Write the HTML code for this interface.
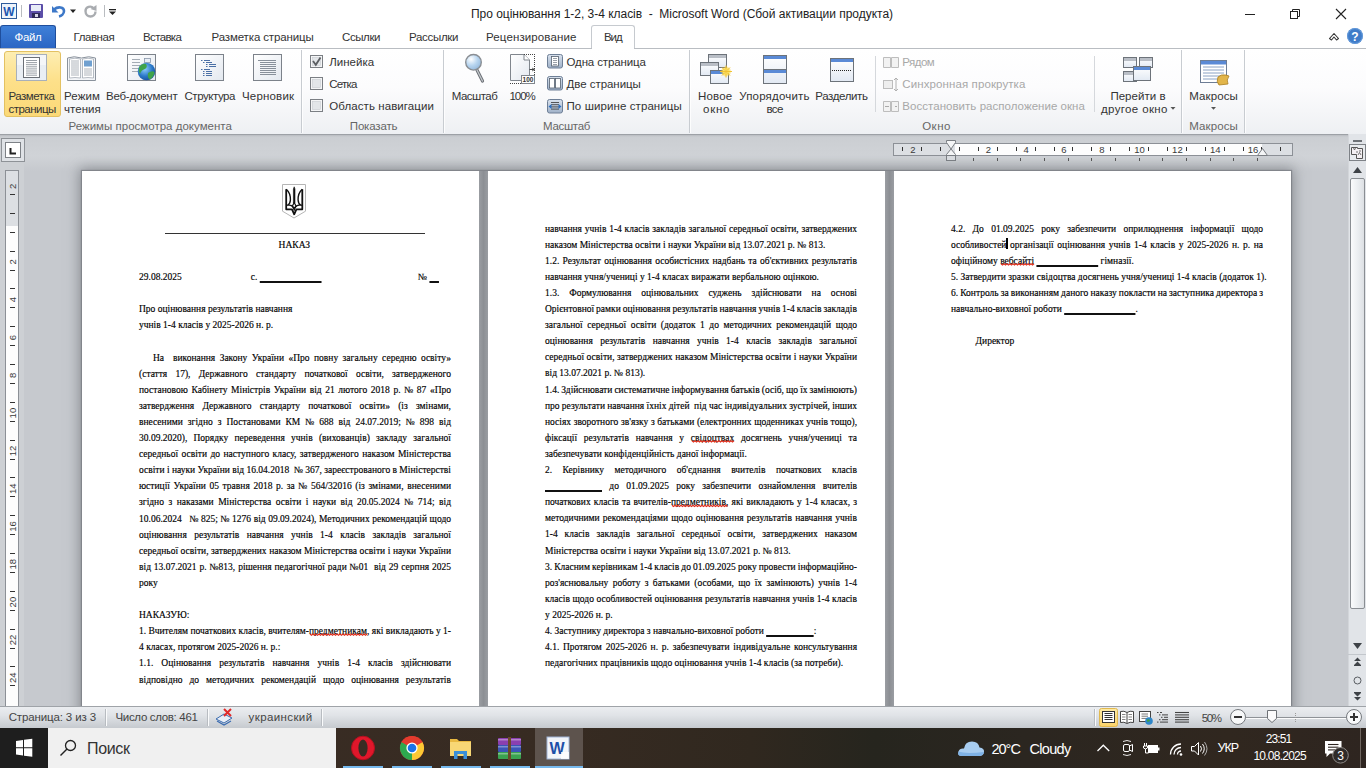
<!DOCTYPE html>
<html><head><meta charset="utf-8"><style>
*{margin:0;padding:0;box-sizing:border-box}
html,body{width:1366px;height:768px;overflow:hidden;background:#c6c9ce;font-family:"Liberation Sans",sans-serif}
.a{position:absolute}
.t{position:absolute;white-space:pre}
.u{color:transparent;-webkit-text-stroke:0;text-decoration:underline;text-decoration-color:#111;text-decoration-thickness:1.5px;text-underline-offset:1.2px}
.d{position:absolute;white-space:pre;font-family:"Liberation Serif",serif;font-size:9.5px;line-height:16px;color:#000;-webkit-text-stroke:0.15px #000}
</style></head>
<body>
<div class="a" style="left:0;top:0;width:1366px;height:48px;background:#fff"></div><div class="a" style="left:0;top:25px;width:56px;height:23px;background:linear-gradient(#3f80d8,#2b66c4);border:1px solid #1f4e9c;border-bottom:none;border-radius:3px 3px 0 0"></div><div class="a" style="left:591px;top:25px;width:44px;height:24px;background:#fff;border:1px solid #c6cacf;border-bottom:none;border-radius:3px 3px 0 0"></div><div class="a" style="left:0;top:48px;width:1366px;height:87px;background:linear-gradient(#ffffff 0%,#fcfcfd 45%,#eef0f3 100%);border-top:1px solid #b9bdc2;border-bottom:1px solid #9da1a6"></div><div class="a" style="left:592px;top:47px;width:42px;height:3px;background:#fff"></div><svg class="a" style="left:0;top:0" width="1366" height="134"><defs>
<linearGradient id="gBtn" x1="0" y1="0" x2="0" y2="1"><stop offset="0" stop-color="#fdeeb3"/><stop offset=".45" stop-color="#fde08a"/><stop offset="1" stop-color="#fbd977"/></linearGradient>
<linearGradient id="gFrame" x1="0" y1="0" x2="1" y2="1"><stop offset="0" stop-color="#ffffff"/><stop offset="1" stop-color="#e3e8ef"/></linearGradient>
<linearGradient id="gBlueBtn" x1="0" y1="0" x2="0" y2="1"><stop offset="0" stop-color="#d9e2ee"/><stop offset="1" stop-color="#9fb1c8"/></linearGradient>
<radialGradient id="gGlobe" cx=".4" cy=".35" r=".7"><stop offset="0" stop-color="#8fd0ff"/><stop offset=".6" stop-color="#2a78c8"/><stop offset="1" stop-color="#1a4f9a"/></radialGradient>
<radialGradient id="gLens" cx=".35" cy=".3" r=".8"><stop offset="0" stop-color="#ffffff"/><stop offset=".5" stop-color="#b9d6f0"/><stop offset="1" stop-color="#8fb4d8"/></radialGradient>
<radialGradient id="gSpark" cx=".5" cy=".5" r=".5"><stop offset="0" stop-color="#fffbe0"/><stop offset=".5" stop-color="#ffe35a"/><stop offset="1" stop-color="#f5c21b" stop-opacity="0"/></radialGradient>
<linearGradient id="gWin" x1="0" y1="0" x2="0" y2="1"><stop offset="0" stop-color="#ffffff"/><stop offset="1" stop-color="#e2e9f3"/></linearGradient>
</defs><rect x="1.5" y="3.5" width="15" height="15" fill="#eef4fb" stroke="#2f5c9c" stroke-width="1"/><text x="9" y="15.5" font-family="Liberation Sans" font-weight="bold" font-size="12" fill="#1b56b0" text-anchor="middle">W</text><line x1="21.5" y1="5" x2="21.5" y2="17" stroke="#b9bcc0"/><rect x="29" y="4" width="14" height="14" rx="1" fill="#5b4ea8"/><rect x="31" y="5" width="10" height="6" fill="#e8ecf7"/><rect x="32" y="13" width="8" height="5" fill="#2d2a58"/><rect x="35" y="14" width="3" height="3" fill="#d6d6e8"/><path d="M54 9.5 C58 6 64 7 64 11 C64 14 61 16 59 16.5" fill="none" stroke="#3d78c8" stroke-width="2.6"/><path d="M52 6 L52 12.5 L58.5 12.5 Z" fill="#3d78c8"/><path d="M70 9.5 H76 L73 13 Z" fill="#222"/><path d="M93.5 8 C91 5.5 85.5 6.5 85.5 11 C85.5 14.5 88 16.5 90.5 16.5 C93 16.5 95.5 14.5 95.5 11.5" fill="none" stroke="#a9acb0" stroke-width="2.4"/><path d="M96.5 5 L96.5 11 L90.5 9 Z" fill="#a9acb0"/><line x1="104.5" y1="5" x2="104.5" y2="17" stroke="#b9bcc0"/><rect x="109" y="9" width="7" height="1.3" fill="#222"/><path d="M109 11.5 H116 L112.5 15 Z" fill="#222"/><line x1="1245" y1="14.5" x2="1255" y2="14.5" stroke="#222" stroke-width="1"/><rect x="1290.5" y="11.5" width="7" height="7" fill="none" stroke="#222"/><path d="M1292.5 11.5 V9.5 H1299.5 V16.5 H1297.5" fill="none" stroke="#222"/><path d="M1336 9 L1346 19 M1346 9 L1336 19" stroke="#222" stroke-width="1.1"/><path d="M1329.5 38.5 L1334 33.5 L1338.5 38.5 L1336.5 40 L1334 37 L1331.5 40 Z" fill="#fff" stroke="#333" stroke-width="1.1" stroke-linejoin="round"/><circle cx="1355" cy="36" r="8" fill="#3f7cc9"/><circle cx="1355" cy="36" r="7.4" fill="none" stroke="#6ea3e0" stroke-width=".8"/><text x="1355" y="41" font-family="Liberation Sans" font-weight="bold" font-size="12" fill="#fff" text-anchor="middle">?</text><rect x="4.5" y="51.5" width="56" height="65" rx="2.5" fill="url(#gBtn)" stroke="#e3c162"/><rect x="16.5" y="54.5" width="30" height="26" fill="#e9eef4" stroke="#a8b0ba"/><rect x="17" y="55" width="29" height="10" fill="#f4f6f9"/><rect x="23.5" y="57.5" width="16" height="20" fill="#fff" stroke="#6b7077"/><line x1="26" y1="60.5" x2="37" y2="60.5" stroke="#8c939b" stroke-width=".9"/><line x1="26" y1="62.6" x2="37" y2="62.6" stroke="#8c939b" stroke-width=".9"/><line x1="26" y1="64.7" x2="37" y2="64.7" stroke="#8c939b" stroke-width=".9"/><line x1="26" y1="66.8" x2="37" y2="66.8" stroke="#8c939b" stroke-width=".9"/><line x1="26" y1="68.9" x2="37" y2="68.9" stroke="#8c939b" stroke-width=".9"/><line x1="26" y1="71.0" x2="37" y2="71.0" stroke="#8c939b" stroke-width=".9"/><line x1="26" y1="73.1" x2="37" y2="73.1" stroke="#8c939b" stroke-width=".9"/><line x1="26" y1="75.2" x2="37" y2="75.2" stroke="#8c939b" stroke-width=".9"/><path d="M67.5 80.5 V58 Q74 55.5 81.5 58 Q89 55.5 95.5 58 V80.5 Z" fill="#f3f5f8" stroke="#8a929c"/><path d="M69.5 78 V59 Q75 57.5 80.5 59 V78 Q75 77 69.5 78 Z" fill="#fff" stroke="#9aa1aa" stroke-width=".7"/><path d="M82.5 78 V59 Q88 57.5 93.5 59 V78 Q88 77 82.5 78 Z" fill="#fff" stroke="#9aa1aa" stroke-width=".7"/><line x1="71" y1="61" x2="79" y2="61" stroke="#9aa1aa" stroke-width=".8"/><line x1="71" y1="63" x2="79" y2="63" stroke="#9aa1aa" stroke-width=".8"/><line x1="71" y1="65" x2="79" y2="65" stroke="#9aa1aa" stroke-width=".8"/><line x1="71" y1="67" x2="79" y2="67" stroke="#9aa1aa" stroke-width=".8"/><line x1="71" y1="69" x2="79" y2="69" stroke="#9aa1aa" stroke-width=".8"/><line x1="71" y1="71" x2="79" y2="71" stroke="#9aa1aa" stroke-width=".8"/><line x1="71" y1="73" x2="79" y2="73" stroke="#9aa1aa" stroke-width=".8"/><line x1="71" y1="75" x2="79" y2="75" stroke="#9aa1aa" stroke-width=".8"/><rect x="84" y="60.5" width="8" height="6" fill="#6fa0d0"/><line x1="84" y1="69" x2="92" y2="69" stroke="#9aa1aa" stroke-width=".8"/><line x1="84" y1="71" x2="92" y2="71" stroke="#9aa1aa" stroke-width=".8"/><line x1="84" y1="73" x2="92" y2="73" stroke="#9aa1aa" stroke-width=".8"/><line x1="84" y1="75" x2="92" y2="75" stroke="#9aa1aa" stroke-width=".8"/><rect x="127.5" y="54.5" width="28" height="26" fill="url(#gFrame)" stroke="#7c828a"/><line x1="132" y1="59.5" x2="140" y2="59.5" stroke="#9aa3ad" stroke-width=".9"/><line x1="132" y1="62.5" x2="140" y2="62.5" stroke="#9aa3ad" stroke-width=".9"/><line x1="132" y1="65.5" x2="140" y2="65.5" stroke="#9aa3ad" stroke-width=".9"/><line x1="132" y1="68.5" x2="140" y2="68.5" stroke="#9aa3ad" stroke-width=".9"/><line x1="132" y1="71.5" x2="140" y2="71.5" stroke="#9aa3ad" stroke-width=".9"/><rect x="144.5" y="58.5" width="6" height="4" fill="#e8eef6" stroke="#8896a8" stroke-width=".8"/><circle cx="146.5" cy="71.5" r="8.8" fill="url(#gGlobe)"/><path d="M139 67 Q142 63 146 64 Q148 67 145 69 Q141 70 140 74 Q138 71 139 67 Z M148 73 Q152 70 154.5 72 Q154 77 150 79.5 Q147 78 148 73 Z" fill="#3fa34a"/><rect x="195.5" y="54.5" width="28" height="26" fill="url(#gFrame)" stroke="#7c828a"/><line x1="201" y1="60.5" x2="202.5" y2="60.5" stroke="#4a6fa5" stroke-width="1"/><line x1="204" y1="60.5" x2="210" y2="60.5" stroke="#4a6fa5" stroke-width="1"/><line x1="203" y1="62.5" x2="204.5" y2="62.5" stroke="#4a6fa5" stroke-width="1"/><line x1="206" y1="62.5" x2="212" y2="62.5" stroke="#4a6fa5" stroke-width="1"/><line x1="206" y1="64.5" x2="207.5" y2="64.5" stroke="#4a6fa5" stroke-width="1"/><line x1="209" y1="64.5" x2="216" y2="64.5" stroke="#4a6fa5" stroke-width="1"/><line x1="206" y1="66.5" x2="207.5" y2="66.5" stroke="#4a6fa5" stroke-width="1"/><line x1="209" y1="66.5" x2="216" y2="66.5" stroke="#4a6fa5" stroke-width="1"/><line x1="201" y1="69.5" x2="202.5" y2="69.5" stroke="#4a6fa5" stroke-width="1"/><line x1="204" y1="69.5" x2="210" y2="69.5" stroke="#4a6fa5" stroke-width="1"/><line x1="203" y1="71.5" x2="204.5" y2="71.5" stroke="#4a6fa5" stroke-width="1"/><line x1="206" y1="71.5" x2="212" y2="71.5" stroke="#4a6fa5" stroke-width="1"/><line x1="203" y1="73.5" x2="204.5" y2="73.5" stroke="#4a6fa5" stroke-width="1"/><line x1="206" y1="73.5" x2="212" y2="73.5" stroke="#4a6fa5" stroke-width="1"/><line x1="203" y1="75.5" x2="204.5" y2="75.5" stroke="#4a6fa5" stroke-width="1"/><line x1="206" y1="75.5" x2="212" y2="75.5" stroke="#4a6fa5" stroke-width="1"/><rect x="253.5" y="54.5" width="28" height="26" fill="url(#gFrame)" stroke="#7c828a"/><line x1="258" y1="60.5" x2="276" y2="60.5" stroke="#7c8590" stroke-width=".9"/><line x1="260" y1="62.5" x2="276" y2="62.5" stroke="#7c8590" stroke-width=".9"/><line x1="260" y1="64.5" x2="276" y2="64.5" stroke="#7c8590" stroke-width=".9"/><line x1="260" y1="66.5" x2="276" y2="66.5" stroke="#7c8590" stroke-width=".9"/><line x1="260" y1="68.5" x2="276" y2="68.5" stroke="#7c8590" stroke-width=".9"/><line x1="260" y1="70.5" x2="276" y2="70.5" stroke="#7c8590" stroke-width=".9"/><line x1="260" y1="72.5" x2="276" y2="72.5" stroke="#7c8590" stroke-width=".9"/><line x1="260" y1="74.5" x2="276" y2="74.5" stroke="#7c8590" stroke-width=".9"/><line x1="875.5" y1="56" x2="875.5" y2="112" stroke="#d5d8dc"/><line x1="1094.5" y1="56" x2="1094.5" y2="112" stroke="#d5d8dc"/><line x1="301.5" y1="50" x2="301.5" y2="133" stroke="#c8ccd1"/><line x1="302.5" y1="50" x2="302.5" y2="133" stroke="#ffffff" stroke-opacity=".8"/><line x1="443.5" y1="50" x2="443.5" y2="133" stroke="#c8ccd1"/><line x1="444.5" y1="50" x2="444.5" y2="133" stroke="#ffffff" stroke-opacity=".8"/><line x1="689.5" y1="50" x2="689.5" y2="133" stroke="#c8ccd1"/><line x1="690.5" y1="50" x2="690.5" y2="133" stroke="#ffffff" stroke-opacity=".8"/><line x1="1181.5" y1="50" x2="1181.5" y2="133" stroke="#c8ccd1"/><line x1="1182.5" y1="50" x2="1182.5" y2="133" stroke="#ffffff" stroke-opacity=".8"/><line x1="1244.5" y1="50" x2="1244.5" y2="133" stroke="#c8ccd1"/><line x1="1245.5" y1="50" x2="1245.5" y2="133" stroke="#ffffff" stroke-opacity=".8"/><rect x="310.5" y="55.5" width="12" height="12" fill="#f4f5f6" stroke="#7b7f84"/><rect x="312.5" y="57.5" width="8" height="8" fill="#e3e6e9" stroke="#c9ccd0" stroke-width=".6"/><rect x="310.5" y="77.5" width="12" height="12" fill="#f4f5f6" stroke="#7b7f84"/><rect x="312.5" y="79.5" width="8" height="8" fill="#e3e6e9" stroke="#c9ccd0" stroke-width=".6"/><rect x="310.5" y="99.5" width="12" height="12" fill="#f4f5f6" stroke="#7b7f84"/><rect x="312.5" y="101.5" width="8" height="8" fill="#e3e6e9" stroke="#c9ccd0" stroke-width=".6"/><path d="M313 61 L315.8 64.8 L320.5 57.5" fill="none" stroke="#5c5f63" stroke-width="1.8"/><line x1="477" y1="70" x2="482.5" y2="81" stroke="#6d7177" stroke-width="3.2" stroke-linecap="round"/><line x1="477" y1="70" x2="482.5" y2="81" stroke="#c4c8cc" stroke-width="1.2" stroke-linecap="round"/><circle cx="473.5" cy="62.3" r="7.8" fill="url(#gLens)" stroke="#8a8e93" stroke-width="1.4"/><path d="M510.5 54.5 H524 L529.5 60 V80.5 H510.5 Z" fill="url(#gFrame)" stroke="#80868d"/><path d="M524 54.5 V60 H529.5" fill="#fff" stroke="#80868d"/><path d="M524 54.5 H535 M510 83.5 H521" fill="none" stroke="#444" stroke-dasharray="1 1"/><path d="M534.5 56 V84" fill="none" stroke="#444" stroke-dasharray="1 1"/><path d="M529.5 69.5 H534" stroke="#444"/><path d="M532 68 L534.5 69.5 L532 71" fill="none" stroke="#444" stroke-width=".8"/><rect x="521.5" y="75.5" width="13" height="8" fill="#fff" stroke="#80868d"/><text x="528" y="82.3" font-family="Liberation Sans" font-weight="bold" font-size="6.5" fill="#333" text-anchor="middle">100</text><rect x="547.5" y="54.5" width="15" height="13.5" rx="2" fill="url(#gBlueBtn)" stroke="#6e7f96"/><rect x="551.5" y="56.5" width="7" height="9.5" fill="#fff" stroke="#55606e" stroke-width=".8"/><line x1="553" y1="58.5" x2="557" y2="58.5" stroke="#55606e" stroke-width=".6"/><line x1="553" y1="60.5" x2="557" y2="60.5" stroke="#55606e" stroke-width=".6"/><line x1="553" y1="62.5" x2="557" y2="62.5" stroke="#55606e" stroke-width=".6"/><line x1="553" y1="64.5" x2="557" y2="64.5" stroke="#55606e" stroke-width=".6"/><rect x="547.5" y="76.5" width="15" height="13.5" rx="2" fill="url(#gBlueBtn)" stroke="#6e7f96"/><rect x="549.5" y="78.5" width="5" height="9.5" fill="#fff" stroke="#55606e" stroke-width=".8"/><rect x="555.5" y="78.5" width="5" height="9.5" fill="#fff" stroke="#55606e" stroke-width=".8"/><rect x="547.5" y="99.5" width="15" height="13.5" rx="2" fill="url(#gBlueBtn)" stroke="#6e7f96"/><line x1="551" y1="102.5" x2="559" y2="102.5" stroke="#333" stroke-width=".8"/><line x1="551" y1="104.7" x2="559" y2="104.7" stroke="#333" stroke-width=".8"/><line x1="551" y1="106.9" x2="559" y2="106.9" stroke="#333" stroke-width=".8"/><line x1="551" y1="109.1" x2="559" y2="109.1" stroke="#333" stroke-width=".8"/><path d="M548.5 106.5 L551.5 104.0 V109.0 Z M561.5 106.5 L558.5 104.0 V109.0 Z" fill="#2d6fc0"/><rect x="708.5" y="54.5" width="18" height="13" fill="url(#gWin)" stroke="#6d737a"/><rect x="709" y="55" width="17" height="3" fill="#b9bec6"/><rect x="700.5" y="62.5" width="18" height="13" fill="url(#gWin)" stroke="#6d737a"/><rect x="701" y="63" width="17" height="3" fill="#b9bec6"/><rect x="710.5" y="70.5" width="18" height="13" fill="url(#gWin)" stroke="#6d737a"/><rect x="711" y="71" width="17" height="3" fill="#5a8ad6"/><circle cx="726" cy="71.5" r="5.5" fill="url(#gSpark)"/><path d="M726 65.5 V77.5 M720 71.5 H732 M722 67.5 L730 75.5 M730 67.5 L722 75.5" stroke="#f1c232" stroke-width="1"/><rect x="763.5" y="55.5" width="23" height="28" fill="url(#gWin)" stroke="#6d737a"/><rect x="764" y="56" width="22" height="3" fill="#5a8ad6"/><line x1="764" y1="69.5" x2="786" y2="69.5" stroke="#6d737a"/><rect x="764" y="70" width="22" height="3" fill="#5a8ad6"/><rect x="830.5" y="58.5" width="23" height="23" fill="url(#gWin)" stroke="#6d737a"/><rect x="831" y="59" width="22" height="3" fill="#5a8ad6"/><line x1="832" y1="70.5" x2="852" y2="70.5" stroke="#222" stroke-dasharray="1 1"/><path d="M883.5 57.5 H890.5 V67.5 H883.5 Z M891.5 57.5 H898.5 V67.5 H891.5 Z" fill="#f2f2f2" stroke="#bdbdbd"/><rect x="883.5" y="80.5" width="9" height="8" fill="#eee" stroke="#bdbdbd"/><path d="M896 78 V91 M894 80 L896 78 L898 80 M894 89 L896 91 L898 89" fill="none" stroke="#b0b0b0"/><path d="M883.5 101.5 H890.5 V111.5 H883.5 Z M891.5 101.5 H898.5 V111.5 H891.5 Z" fill="#f2f2f2" stroke="#bdbdbd"/><path d="M885 106.5 H889 M895 106.5 H897" stroke="#aaa"/><rect x="1123.5" y="57.5" width="13" height="10" fill="url(#gWin)" stroke="#6d737a"/><rect x="1124" y="58" width="12" height="3" fill="#b9bec6"/><rect x="1139.5" y="57.5" width="13" height="10" fill="url(#gWin)" stroke="#6d737a"/><rect x="1140" y="58" width="12" height="3" fill="#b9bec6"/><rect x="1123.5" y="71.5" width="13" height="10" fill="url(#gWin)" stroke="#6d737a"/><rect x="1124" y="72" width="12" height="3" fill="#b9bec6"/><rect x="1133.5" y="66.5" width="17" height="14" fill="url(#gWin)" stroke="#6d737a"/><rect x="1134" y="67" width="16" height="3" fill="#5a8ad6"/><path d="M1170.5 107 H1175.5 L1173 109.8 Z" fill="#555"/><rect x="1200.5" y="60.5" width="26" height="22" fill="#fff" stroke="#6d7d95"/><rect x="1201" y="61" width="25" height="3.5" fill="#5a8ad6"/><line x1="1203" y1="67" x2="1224" y2="67" stroke="#8aa2c4" stroke-width="1"/><line x1="1203" y1="70" x2="1224" y2="70" stroke="#8aa2c4" stroke-width="1"/><line x1="1203" y1="73" x2="1224" y2="73" stroke="#8aa2c4" stroke-width="1"/><line x1="1203" y1="76" x2="1224" y2="76" stroke="#8aa2c4" stroke-width="1"/><line x1="1203" y1="79" x2="1224" y2="79" stroke="#8aa2c4" stroke-width="1"/><path d="M1218 77 Q1221 74 1226 75 L1229 76 Q1226 80 1228 84 L1219 85 Q1216 82 1218 77 Z" fill="#e2b54a" stroke="#a97e1f" stroke-width=".8"/><path d="M1211 107 H1216 L1213.5 109.8 Z" fill="#555"/></svg><div class="a" style="left:0;top:135px;width:1348px;height:36px;background:linear-gradient(#b9bcc1 0px,#cbced2 2px,#d0d3d7 21px,#c6c9ce 36px)"></div><div class="a" style="left:0;top:162px;width:24px;height:544px;background:#cdd0d4"></div><div class="a" style="left:82px;top:171px;width:1209px;height:560px;box-shadow:0 0 1px 1px rgba(110,114,120,.6),0 0 12px 3px rgba(120,124,130,.75)"></div><div class="a" style="left:82px;top:171px;width:397px;height:535px;background:#fff"></div><div class="a" style="left:488px;top:171px;width:397px;height:535px;background:#fff"></div><div class="a" style="left:894px;top:171px;width:397px;height:535px;background:#fff"></div><div class="a" style="left:479px;top:171px;width:9px;height:535px;background:linear-gradient(90deg,#9a9da2,#8c8f94 50%,#9a9da2)"></div><div class="a" style="left:885px;top:171px;width:9px;height:535px;background:linear-gradient(90deg,#9a9da2,#8c8f94 50%,#9a9da2)"></div><div class="d" style="left:153.00px;top:349.50px;word-spacing:2.050px">На  виконання Закону України «Про повну загальну середню освіту»</div><div class="d" style="left:139.00px;top:365.60px;word-spacing:5.873px">(стаття 17), Державного стандарту початкової освіти, затвердженого</div><div class="d" style="left:139.00px;top:381.70px;word-spacing:1.220px">постановою Кабінету Міністрів України від 21 лютого 2018 р. № 87 «Про</div><div class="d" style="left:139.00px;top:397.80px;word-spacing:5.863px">затвердження Державного стандарту початкової освіти» (із змінами,</div><div class="d" style="left:139.00px;top:413.90px;word-spacing:2.596px">внесеними згідно з Постановами КМ № 688 від 24.07.2019; № 898 від</div><div class="d" style="left:139.00px;top:430.00px;word-spacing:3.802px">30.09.2020), Порядку переведення учнів (вихованців) закладу загальної</div><div class="d" style="left:139.00px;top:446.10px;word-spacing:1.072px">середньої освіти до наступного класу, затвердженого наказом Міністерства</div><div class="d" style="left:139.00px;top:462.20px;word-spacing:-0.020px">освіти і науки України від 16.04.2018  № 367, зареєстрованого в Міністерстві</div><div class="d" style="left:139.00px;top:478.30px;word-spacing:1.253px">юстиції України 05 травня 2018 р. за № 564/32016 (із змінами, внесеними</div><div class="d" style="left:139.00px;top:494.40px;word-spacing:2.085px">згідно з наказами Міністерства освіти і науки від 20.05.2024 № 714; від</div><div class="d" style="left:139.00px;top:510.50px;word-spacing:0.181px">10.06.2024   № 825; № 1276 від 09.09.2024), Методичних рекомендацій щодо</div><div class="d" style="left:139.00px;top:526.60px;word-spacing:4.990px">оцінювання результатів навчання учнів 1-4 класів закладів загальної</div><div class="d" style="left:139.00px;top:542.70px;word-spacing:0.171px">середньої освіти, затверджених наказом Міністерства освіти і науки України</div><div class="d" style="left:139.00px;top:558.80px;word-spacing:0.529px">від 13.07.2021 р. №813, рішення педагогічної ради №01  від 29 серпня 2025</div><div class="d" style="left:139.00px;top:574.90px">року</div><div class="d" style="left:139.00px;top:607.10px">НАКАЗУЮ:</div><div class="d" style="left:139.00px;top:623.20px;word-spacing:0.061px">1. Вчителям початкових класів, вчителям-предметникам, які викладають у 1-</div><div class="d" style="left:139.00px;top:639.30px">4 класах, протягом 2025-2026 н. р.:</div><div class="d" style="left:139.00px;top:655.40px;word-spacing:5.668px">1.1. Оцінювання результатів навчання учнів 1-4 класів здійснювати</div><div class="d" style="left:139.00px;top:671.50px;word-spacing:4.510px">відповідно до методичних рекомендацій щодо оцінювання результатів</div><div class="d" style="left:139.00px;top:301.20px">Про оцінювання результатів навчання</div><div class="d" style="left:139.00px;top:317.30px">учнів 1-4 класів у 2025-2026 н. р.</div><div class="d" style="left:545.00px;top:220.50px;word-spacing:0.374px">навчання учнів 1-4 класів закладів загальної середньої освіти, затверджених</div><div class="d" style="left:545.00px;top:236.60px">наказом Міністерства освіти і науки України від 13.07.2021 р. № 813.</div><div class="d" style="left:545.00px;top:252.70px;word-spacing:0.869px">1.2. Результат оцінювання особистісних надбань та об&#x27;єктивних результатів</div><div class="d" style="left:545.00px;top:268.80px">навчання учня/учениці у 1-4 класах виражати вербальною оцінкою.</div><div class="d" style="left:545.00px;top:284.90px;word-spacing:7.554px">1.3. Формулювання оцінювальних суджень здійснювати на основі</div><div class="d" style="left:545.00px;top:301.00px;word-spacing:-0.445px">Орієнтовної рамки оцінювання результатів навчання учнів 1-4 класів закладів</div><div class="d" style="left:545.00px;top:317.10px;word-spacing:2.142px">загальної середньої освіти (додаток 1 до методичних рекомендацій щодо</div><div class="d" style="left:545.00px;top:333.20px;word-spacing:4.990px">оцінювання результатів навчання учнів 1-4 класів закладів загальної</div><div class="d" style="left:545.00px;top:349.30px;word-spacing:0.171px">середньої освіти, затверджених наказом Міністерства освіти і науки України</div><div class="d" style="left:545.00px;top:365.40px">від 13.07.2021 р. № 813).</div><div class="d" style="left:545.00px;top:381.50px;word-spacing:-0.330px">1.4. Здійснювати систематичне інформування батьків (осіб, що їх замінюють)</div><div class="d" style="left:545.00px;top:397.60px;word-spacing:-0.102px">про результати навчання їхніх дітей  під час індивідуальних зустрічей, інших</div><div class="d" style="left:545.00px;top:413.70px;word-spacing:0.236px">носіях зворотного зв&#x27;язку з батьками (електронних щоденниках учнів тощо),</div><div class="d" style="left:545.00px;top:429.80px;word-spacing:4.306px">фіксації результатів навчання у свідоцтвах досягнень учня/учениці та</div><div class="d" style="left:545.00px;top:445.90px">забезпечувати конфіденційність даної інформації.</div><div class="d" style="left:545.00px;top:462.00px;word-spacing:8.103px">2. Керівнику методичного об&#x27;єднання вчителів початкових класів</div><div class="d" style="left:545.00px;top:478.10px;word-spacing:4.930px"><span class="u">____________</span> до 01.09.2025 року забезпечити ознайомлення вчителів</div><div class="d" style="left:545.00px;top:494.20px;word-spacing:0.783px">початкових класів та вчителів-предметників, які викладають у 1-4 класах, з</div><div class="d" style="left:545.00px;top:510.30px;word-spacing:0.801px">методичними рекомендаціями щодо оцінювання результатів навчання учнів</div><div class="d" style="left:545.00px;top:526.40px;word-spacing:4.542px">1-4 класів закладів загальної середньої освіти, затверджених наказом</div><div class="d" style="left:545.00px;top:542.50px">Міністерства освіти і науки України від 13.07.2021 р. № 813.</div><div class="d" style="left:545.00px;top:558.60px;word-spacing:-0.255px">3. Класним керівникам 1-4 класів до 01.09.2025 року провести інформаційно-</div><div class="d" style="left:545.00px;top:574.70px;word-spacing:1.984px">роз&#x27;яснювальну роботу з батьками (особами, що їх замінюють) учнів 1-4</div><div class="d" style="left:545.00px;top:590.80px;word-spacing:0.253px">класів щодо особливостей оцінювання результатів навчання учнів 1-4 класів</div><div class="d" style="left:545.00px;top:606.90px">у 2025-2026 н. р.</div><div class="d" style="left:545.00px;top:623.00px">4. Заступнику директора з навчально-виховної роботи <span class="u">__________</span>:</div><div class="d" style="left:545.00px;top:639.10px;word-spacing:1.385px">4.1. Протягом 2025-2026 н. р. забезпечувати індивідуальне консультування</div><div class="d" style="left:545.00px;top:655.20px">педагогічних працівників щодо оцінювання учнів 1-4 класів (за потреби).</div><div class="d" style="left:951.00px;top:220.50px;word-spacing:4.951px">4.2. До 01.09.2025 року забезпечити оприлюднення інформації щодо</div><div class="d" style="left:951.00px;top:236.60px;word-spacing:1.225px">особливостей організації оцінювання учнів 1-4 класів у 2025-2026 н. р. на</div><div class="d" style="left:951.00px;top:252.70px">офіційному вебсайті <span class="u">_____________</span> гімназії.</div><div class="d" style="left:951.00px;top:268.80px">5. Затвердити зразки свідоцтва досягнень учня/учениці 1-4 класів (додаток 1).</div><div class="d" style="left:951.00px;top:284.90px;word-spacing:-0.308px">6. Контроль за виконанням даного наказу покласти на заступника директора з</div><div class="d" style="left:951.00px;top:301.00px">навчально-виховної роботи <span class="u">_______________</span>.</div><div class="d" style="left:975.60px;top:333.20px">Директор</div><div class="d" style="left:278.6px;top:236.80px;">НАКАЗ</div><div class="d" style="left:139px;top:269.00px;">29.08.2025</div><div class="d" style="left:250.8px;top:269.00px;">с. <span class="u">_____________</span></div><div class="d" style="left:418px;top:269.00px;">№ <span class="u">__</span></div><div class="a" style="left:165px;top:232.5px;width:260px;height:1.5px;background:#333"></div><svg class="a" style="left:282px;top:184px" width="25" height="36"><path d="M0.5 0.5 H23.5 V27.2 L12 34 L0.5 27.2 Z" fill="#fff" stroke="#b5b5b5" stroke-width="1"/><path d="M4.2 5.3 V25.3 H10 L12.2 30.3 L14.4 25.3 H20.3 V5.3" fill="none" stroke="#111" stroke-width="1.8" stroke-linejoin="round"/><path d="M4.2 5.3 Q8.6 9 8.4 16 Q8.2 20 5.5 21.3 M20.3 5.3 Q15.9 9 16.1 16 Q16.3 20 19 21.3 M4.2 21.3 Q8.5 19.8 12.2 24 Q15.9 19.8 20.3 21.3" fill="none" stroke="#111" stroke-width="1.4"/><path d="M12.2 2.8 L13 5 V19 H11.4 V5 Z" fill="#111" stroke="#111" stroke-width=".6"/><path d="M12.2 18.5 L10.4 22 L12.2 26 L14 22 Z" fill="none" stroke="#111" stroke-width="1.2"/></svg><svg class="a" style="left:0;top:0;overflow:visible" width="1" height="1"><polyline points="310.0,634.0 311.5,635.2 313.0,634.0 314.5,635.2 316.0,634.0 317.5,635.2 319.0,634.0 320.5,635.2 322.0,634.0 323.5,635.2 325.0,634.0 326.5,635.2 328.0,634.0 329.5,635.2 331.0,634.0 332.5,635.2 334.0,634.0 335.5,635.2 337.0,634.0 338.5,635.2 340.0,634.0 341.5,635.2 343.0,634.0 344.5,635.2 346.0,634.0 347.5,635.2 349.0,634.0 350.5,635.2 352.0,634.0 353.5,635.2 355.0,634.0 356.5,635.2 358.0,634.0 359.5,635.2 361.0,634.0 362.5,635.2 364.0,634.0 365.5,635.2 367.0,634.0" fill="none" stroke="#e0301e" stroke-width="1.2"/></svg><svg class="a" style="left:0;top:0;overflow:visible" width="1" height="1"><polyline points="692.0,440.8 693.5,442.0 695.0,440.8 696.5,442.0 698.0,440.8 699.5,442.0 701.0,440.8 702.5,442.0 704.0,440.8 705.5,442.0 707.0,440.8 708.5,442.0 710.0,440.8 711.5,442.0 713.0,440.8 714.5,442.0 716.0,440.8 717.5,442.0 719.0,440.8 720.5,442.0 722.0,440.8 723.5,442.0 725.0,440.8 726.5,442.0 728.0,440.8 729.5,442.0 731.0,440.8 732.5,442.0 734.0,440.8" fill="none" stroke="#e0301e" stroke-width="1.2"/></svg><svg class="a" style="left:0;top:0;overflow:visible" width="1" height="1"><polyline points="672.0,505.3 673.5,506.5 675.0,505.3 676.5,506.5 678.0,505.3 679.5,506.5 681.0,505.3 682.5,506.5 684.0,505.3 685.5,506.5 687.0,505.3 688.5,506.5 690.0,505.3 691.5,506.5 693.0,505.3 694.5,506.5 696.0,505.3 697.5,506.5 699.0,505.3 700.5,506.5 702.0,505.3 703.5,506.5 705.0,505.3 706.5,506.5 708.0,505.3 709.5,506.5 711.0,505.3 712.5,506.5 714.0,505.3 715.5,506.5 717.0,505.3 718.5,506.5 720.0,505.3 721.5,506.5 723.0,505.3 724.5,506.5 726.0,505.3 727.5,506.5" fill="none" stroke="#e0301e" stroke-width="1.2"/></svg><svg class="a" style="left:0;top:0;overflow:visible" width="1" height="1"><polyline points="1001.0,263.8 1002.5,265.0 1004.0,263.8 1005.5,265.0 1007.0,263.8 1008.5,265.0 1010.0,263.8 1011.5,265.0 1013.0,263.8 1014.5,265.0 1016.0,263.8 1017.5,265.0 1019.0,263.8 1020.5,265.0 1022.0,263.8 1023.5,265.0 1025.0,263.8 1026.5,265.0 1028.0,263.8 1029.5,265.0 1031.0,263.8 1032.5,265.0 1034.0,263.8" fill="none" stroke="#e0301e" stroke-width="1.2"/></svg><div class="a" style="left:1006px;top:238px;width:2px;height:11px;background:#000"></div><div class="a" style="left:1px;top:138px;width:24px;height:24px;border:1px solid #8e9297;background:#dfe2e6"></div><div class="a" style="left:5px;top:142px;width:16px;height:16px;border:1px solid #7d8186;background:#fff"></div><svg class="a" style="left:0;top:130px" width="30" height="40"><path d="M10.5 18 V23.5 H16" stroke="#222" stroke-width="2" fill="none"/></svg><div class="a" style="left:893px;top:143px;width:400px;height:13px;background:#dcdfe3;border:1px solid #8c9096"></div><div class="a" style="left:955px;top:144px;width:307px;height:11px;background:#fdfdfd"></div><svg class="a" style="left:0;top:0" width="1366" height="200"><line x1="902.5" y1="147" x2="902.5" y2="151" stroke="#333" stroke-width="1"/><line x1="921.5" y1="147" x2="921.5" y2="151" stroke="#333" stroke-width="1"/><line x1="940.5" y1="147" x2="940.5" y2="151" stroke="#333" stroke-width="1"/><line x1="959.5" y1="147" x2="959.5" y2="151" stroke="#333" stroke-width="1"/><line x1="978.5" y1="147" x2="978.5" y2="151" stroke="#333" stroke-width="1"/><line x1="997.5" y1="147" x2="997.5" y2="151" stroke="#333" stroke-width="1"/><line x1="1016.5" y1="147" x2="1016.5" y2="151" stroke="#333" stroke-width="1"/><line x1="1035.5" y1="147" x2="1035.5" y2="151" stroke="#333" stroke-width="1"/><line x1="1054.5" y1="147" x2="1054.5" y2="151" stroke="#333" stroke-width="1"/><line x1="1072.5" y1="147" x2="1072.5" y2="151" stroke="#333" stroke-width="1"/><line x1="1091.5" y1="147" x2="1091.5" y2="151" stroke="#333" stroke-width="1"/><line x1="1110.5" y1="147" x2="1110.5" y2="151" stroke="#333" stroke-width="1"/><line x1="1129.5" y1="147" x2="1129.5" y2="151" stroke="#333" stroke-width="1"/><line x1="1148.5" y1="147" x2="1148.5" y2="151" stroke="#333" stroke-width="1"/><line x1="1167.5" y1="147" x2="1167.5" y2="151" stroke="#333" stroke-width="1"/><line x1="1186.5" y1="147" x2="1186.5" y2="151" stroke="#333" stroke-width="1"/><line x1="1205.5" y1="147" x2="1205.5" y2="151" stroke="#333" stroke-width="1"/><line x1="1224.5" y1="147" x2="1224.5" y2="151" stroke="#333" stroke-width="1"/><line x1="1243.5" y1="147" x2="1243.5" y2="151" stroke="#333" stroke-width="1"/><line x1="1261.5" y1="147" x2="1261.5" y2="151" stroke="#333" stroke-width="1"/><line x1="1280.5" y1="147" x2="1280.5" y2="151" stroke="#333" stroke-width="1"/><text x="912.8" y="152.5" font-family="Liberation Sans" font-size="9.5" fill="#3a3a3a" text-anchor="middle">2</text><text x="988.4" y="152.5" font-family="Liberation Sans" font-size="9.5" fill="#3a3a3a" text-anchor="middle">2</text><text x="1026.2" y="152.5" font-family="Liberation Sans" font-size="9.5" fill="#3a3a3a" text-anchor="middle">4</text><text x="1064.0" y="152.5" font-family="Liberation Sans" font-size="9.5" fill="#3a3a3a" text-anchor="middle">6</text><text x="1101.8" y="152.5" font-family="Liberation Sans" font-size="9.5" fill="#3a3a3a" text-anchor="middle">8</text><text x="1139.6" y="152.5" font-family="Liberation Sans" font-size="9.5" fill="#3a3a3a" text-anchor="middle">10</text><text x="1177.4" y="152.5" font-family="Liberation Sans" font-size="9.5" fill="#3a3a3a" text-anchor="middle">12</text><text x="1215.2" y="152.5" font-family="Liberation Sans" font-size="9.5" fill="#3a3a3a" text-anchor="middle">14</text><text x="1253.0" y="152.5" font-family="Liberation Sans" font-size="9.5" fill="#3a3a3a" text-anchor="middle">16</text><line x1="973.5" y1="158" x2="973.5" y2="161" stroke="#555" stroke-width="1"/><line x1="997.5" y1="158" x2="997.5" y2="161" stroke="#555" stroke-width="1"/><line x1="1020.5" y1="158" x2="1020.5" y2="161" stroke="#555" stroke-width="1"/><line x1="1044.5" y1="158" x2="1044.5" y2="161" stroke="#555" stroke-width="1"/><line x1="1068.5" y1="158" x2="1068.5" y2="161" stroke="#555" stroke-width="1"/><line x1="1091.5" y1="158" x2="1091.5" y2="161" stroke="#555" stroke-width="1"/><line x1="1115.5" y1="158" x2="1115.5" y2="161" stroke="#555" stroke-width="1"/><line x1="1139.5" y1="158" x2="1139.5" y2="161" stroke="#555" stroke-width="1"/><line x1="1162.5" y1="158" x2="1162.5" y2="161" stroke="#555" stroke-width="1"/><line x1="1186.5" y1="158" x2="1186.5" y2="161" stroke="#555" stroke-width="1"/><line x1="1210.5" y1="158" x2="1210.5" y2="161" stroke="#555" stroke-width="1"/><line x1="1233.5" y1="158" x2="1233.5" y2="161" stroke="#555" stroke-width="1"/><line x1="1257.5" y1="158" x2="1257.5" y2="161" stroke="#555" stroke-width="1"/><path d="M946.5 140.5 H955.5 V142.5 L951 149 L955.5 154.5 V155.5 H946.5 V154.5 L951 149 L946.5 142.5 Z" fill="#f4f5f6" stroke="#7a7e83" stroke-width="1"/><rect x="946.5" y="155.5" width="9" height="5" fill="#d8dbdf" stroke="#7a7e83" stroke-width="1"/><path d="M1257.5 155.5 L1262.5 148.5 L1267.5 155.5 Z" fill="#f4f5f6" stroke="#7a7e83" stroke-width="1"/></svg><div class="a" style="left:5px;top:170px;width:14px;height:560px;background:#dcdfe3;border:1px solid #8c9096"></div><div class="a" style="left:6px;top:226px;width:12px;height:500px;background:#fdfdfd"></div><svg class="a" style="left:0;top:0" width="30" height="768"><line x1="10" y1="194.5" x2="15" y2="194.5" stroke="#333" stroke-width="1"/><line x1="10" y1="213.5" x2="15" y2="213.5" stroke="#333" stroke-width="1"/><line x1="10" y1="232.5" x2="15" y2="232.5" stroke="#333" stroke-width="1"/><line x1="10" y1="251.5" x2="15" y2="251.5" stroke="#333" stroke-width="1"/><line x1="10" y1="270.5" x2="15" y2="270.5" stroke="#333" stroke-width="1"/><line x1="10" y1="288.5" x2="15" y2="288.5" stroke="#333" stroke-width="1"/><line x1="10" y1="307.5" x2="15" y2="307.5" stroke="#333" stroke-width="1"/><line x1="10" y1="326.5" x2="15" y2="326.5" stroke="#333" stroke-width="1"/><line x1="10" y1="345.5" x2="15" y2="345.5" stroke="#333" stroke-width="1"/><line x1="10" y1="364.5" x2="15" y2="364.5" stroke="#333" stroke-width="1"/><line x1="10" y1="383.5" x2="15" y2="383.5" stroke="#333" stroke-width="1"/><line x1="10" y1="402.5" x2="15" y2="402.5" stroke="#333" stroke-width="1"/><line x1="10" y1="421.5" x2="15" y2="421.5" stroke="#333" stroke-width="1"/><line x1="10" y1="440.5" x2="15" y2="440.5" stroke="#333" stroke-width="1"/><line x1="10" y1="459.5" x2="15" y2="459.5" stroke="#333" stroke-width="1"/><line x1="10" y1="477.5" x2="15" y2="477.5" stroke="#333" stroke-width="1"/><line x1="10" y1="496.5" x2="15" y2="496.5" stroke="#333" stroke-width="1"/><line x1="10" y1="515.5" x2="15" y2="515.5" stroke="#333" stroke-width="1"/><line x1="10" y1="534.5" x2="15" y2="534.5" stroke="#333" stroke-width="1"/><line x1="10" y1="553.5" x2="15" y2="553.5" stroke="#333" stroke-width="1"/><line x1="10" y1="572.5" x2="15" y2="572.5" stroke="#333" stroke-width="1"/><line x1="10" y1="591.5" x2="15" y2="591.5" stroke="#333" stroke-width="1"/><line x1="10" y1="610.5" x2="15" y2="610.5" stroke="#333" stroke-width="1"/><line x1="10" y1="629.5" x2="15" y2="629.5" stroke="#333" stroke-width="1"/><line x1="10" y1="648.5" x2="15" y2="648.5" stroke="#333" stroke-width="1"/><line x1="10" y1="666.5" x2="15" y2="666.5" stroke="#333" stroke-width="1"/><line x1="10" y1="685.5" x2="15" y2="685.5" stroke="#333" stroke-width="1"/><text x="0" y="0" transform="translate(15.5 186.3) rotate(-90)" font-family="Liberation Sans" font-size="9.5" fill="#3a3a3a" text-anchor="middle">2</text><text x="0" y="0" transform="translate(15.5 261.9) rotate(-90)" font-family="Liberation Sans" font-size="9.5" fill="#3a3a3a" text-anchor="middle">2</text><text x="0" y="0" transform="translate(15.5 299.7) rotate(-90)" font-family="Liberation Sans" font-size="9.5" fill="#3a3a3a" text-anchor="middle">4</text><text x="0" y="0" transform="translate(15.5 337.5) rotate(-90)" font-family="Liberation Sans" font-size="9.5" fill="#3a3a3a" text-anchor="middle">6</text><text x="0" y="0" transform="translate(15.5 375.3) rotate(-90)" font-family="Liberation Sans" font-size="9.5" fill="#3a3a3a" text-anchor="middle">8</text><text x="0" y="0" transform="translate(15.5 413.1) rotate(-90)" font-family="Liberation Sans" font-size="9.5" fill="#3a3a3a" text-anchor="middle">10</text><text x="0" y="0" transform="translate(15.5 450.9) rotate(-90)" font-family="Liberation Sans" font-size="9.5" fill="#3a3a3a" text-anchor="middle">12</text><text x="0" y="0" transform="translate(15.5 488.7) rotate(-90)" font-family="Liberation Sans" font-size="9.5" fill="#3a3a3a" text-anchor="middle">14</text><text x="0" y="0" transform="translate(15.5 526.5) rotate(-90)" font-family="Liberation Sans" font-size="9.5" fill="#3a3a3a" text-anchor="middle">16</text><text x="0" y="0" transform="translate(15.5 564.3) rotate(-90)" font-family="Liberation Sans" font-size="9.5" fill="#3a3a3a" text-anchor="middle">18</text><text x="0" y="0" transform="translate(15.5 602.1) rotate(-90)" font-family="Liberation Sans" font-size="9.5" fill="#3a3a3a" text-anchor="middle">20</text><text x="0" y="0" transform="translate(15.5 639.9) rotate(-90)" font-family="Liberation Sans" font-size="9.5" fill="#3a3a3a" text-anchor="middle">22</text><text x="0" y="0" transform="translate(15.5 677.7) rotate(-90)" font-family="Liberation Sans" font-size="9.5" fill="#3a3a3a" text-anchor="middle">24</text></svg><div class="a" style="left:1348px;top:134px;width:18px;height:572px;background:#e1e4e8;border-left:1px solid #d3d6da"></div><div class="a" style="left:1353px;top:140px;width:9px;height:2px;background:#6d7176"></div><div class="a" style="left:1349px;top:144px;width:17px;height:17px;border:1px solid #7e8287;background:#e8ebee"></div><svg class="a" style="left:1348px;top:134px" width="18" height="572"><path d="M3.5 13.5 V20.5 H8.5 V24.5 H14.5 V14.5 H9.5 V13.5 Z" fill="#f4f0f3" stroke="#555" stroke-width="1"/><path d="M5 13 L6.5 16 L8 13 M10 21 L11.5 18.5 L13 21 M9 17 v2 M12 16 v2" fill="none" stroke="#555" stroke-width=".8"/><path d="M5 39 L9.5 33 L14 39 Z" fill="#3e4247"/><path d="M5 509 L9.5 515 L14 509 Z" fill="#3e4247"/><line x1="0" y1="520.5" x2="18" y2="520.5" stroke="#c3c7cc"/><path d="M6 527 L9.5 523.5 L13 527 Z M6 531 L9.5 527.5 L13 531 Z M6 531 H13 V532 H6Z" fill="#3e4247"/><circle cx="9.5" cy="546.5" r="3.5" fill="none" stroke="#5a5e63" stroke-width="1"/><path d="M6 559 L9.5 562.5 L13 559 Z M6 563 L9.5 566.5 L13 563 Z M6 558 H13 V559 H6Z" fill="#3e4247"/></svg><div class="a" style="left:1350px;top:178px;width:15px;height:431px;border:1px solid #8a8e93;border-radius:2px;background:linear-gradient(90deg,#fafbfc,#e9ecef 60%,#dde0e4)"></div><div class="a" style="left:0;top:706px;width:1366px;height:22px;background:linear-gradient(#ebedf0 0%,#e0e3e7 40%,#c6cacf 100%);border-top:1px solid #9fa3a8"></div><div class="a" style="left:0;top:728px;width:1366px;height:40px;background:linear-gradient(90deg,#3a2d25 0%,#372b22 40%,#30281f 55%,#26251e 64%,#2b2620 75%,#30271f 90%,#2e2520 100%)"></div><div class="a" style="left:0;top:728px;width:48px;height:40px;background:#1e1e1e"></div><div class="a" style="left:48px;top:728px;width:288px;height:40px;background:#f0f0f0"></div><svg class="a" style="left:0;top:700px" width="1366" height="68"><defs>
<linearGradient id="gAct" x1="0" y1="0" x2="0" y2="1"><stop offset="0" stop-color="#fdeaa5"/><stop offset="1" stop-color="#fbd36a"/></linearGradient>
<linearGradient id="gFold" x1="0" y1="0" x2="0" y2="1"><stop offset="0" stop-color="#f7d77a"/><stop offset="1" stop-color="#e9b73f"/></linearGradient>
</defs><line x1="105.5" y1="9" x2="105.5" y2="26" stroke="#b8bcc1"/><line x1="106.5" y1="9" x2="106.5" y2="26" stroke="#fafbfc"/><rect x="535" y="28" width="48" height="40" fill="#5d534d"/><line x1="207.5" y1="9" x2="207.5" y2="26" stroke="#b8bcc1"/><line x1="208.5" y1="9" x2="208.5" y2="26" stroke="#fafbfc"/><line x1="321.5" y1="9" x2="321.5" y2="26" stroke="#b8bcc1"/><line x1="322.5" y1="9" x2="322.5" y2="26" stroke="#fafbfc"/><line x1="1094.5" y1="9" x2="1094.5" y2="26" stroke="#b8bcc1"/><line x1="1095.5" y1="9" x2="1095.5" y2="26" stroke="#fafbfc"/><path d="M216 19 L224 14 L232 18 L224 23 Z" fill="#e8eef7" stroke="#3a6bb0" stroke-width="1"/><path d="M217 21 L224 25 L231 21" fill="none" stroke="#3a6bb0" stroke-width="1.2"/><path d="M224 9 L231 16 M231 9 L224 16" stroke="#e02a2a" stroke-width="2"/><rect x="1099.5" y="8.5" width="18" height="18" rx="2" fill="url(#gAct)" stroke="#e1b94f"/><rect x="1102.5" y="11.5" width="12" height="11" fill="#fff" stroke="#333"/><line x1="1104.5" y1="13.5" x2="1112.5" y2="13.5" stroke="#333" stroke-width="1"/><line x1="1104.5" y1="15.5" x2="1112.5" y2="15.5" stroke="#333" stroke-width="1"/><line x1="1104.5" y1="17.5" x2="1112.5" y2="17.5" stroke="#333" stroke-width="1"/><line x1="1104.5" y1="19.5" x2="1112.5" y2="19.5" stroke="#333" stroke-width="1"/><path d="M1120.5 11.5 Q1124 10.5 1127 12.5 Q1130 10.5 1133.5 11.5 V22.5 Q1130 21.5 1127 23.5 Q1124 21.5 1120.5 22.5 Z M1127 12.5 V23" fill="#fff" stroke="#444"/><line x1="1122" y1="14.5" x2="1125.5" y2="14.5" stroke="#666" stroke-width=".8"/><line x1="1128.5" y1="14.5" x2="1132" y2="14.5" stroke="#666" stroke-width=".8"/><line x1="1122" y1="17.0" x2="1125.5" y2="17.0" stroke="#666" stroke-width=".8"/><line x1="1128.5" y1="17.0" x2="1132" y2="17.0" stroke="#666" stroke-width=".8"/><line x1="1122" y1="19.5" x2="1125.5" y2="19.5" stroke="#666" stroke-width=".8"/><line x1="1128.5" y1="19.5" x2="1132" y2="19.5" stroke="#666" stroke-width=".8"/><rect x="1139.5" y="11.5" width="11" height="10" fill="#fff" stroke="#444"/><line x1="1141.5" y1="14.0" x2="1148" y2="14.0" stroke="#555" stroke-width=".8"/><line x1="1141.5" y1="16.200000000000045" x2="1148" y2="16.200000000000045" stroke="#555" stroke-width=".8"/><line x1="1141.5" y1="18.399999999999977" x2="1148" y2="18.399999999999977" stroke="#555" stroke-width=".8"/><circle cx="1149" cy="21" r="3.8" fill="#2e86c9"/><path d="M1147 19.5 q2 -1 3 1 q-1 2 -3 1 z" fill="#3aa04a"/><line x1="1157" y1="12.5" x2="1158.5" y2="12.5" stroke="#444"/><line x1="1160" y1="12.5" x2="1162" y2="12.5" stroke="#444"/><line x1="1159" y1="14.899999999999977" x2="1160.5" y2="14.899999999999977" stroke="#444"/><line x1="1162" y1="14.899999999999977" x2="1168" y2="14.899999999999977" stroke="#444"/><line x1="1161" y1="17.299999999999955" x2="1162.5" y2="17.299999999999955" stroke="#444"/><line x1="1164" y1="17.299999999999955" x2="1168" y2="17.299999999999955" stroke="#444"/><line x1="1159" y1="19.700000000000045" x2="1160.5" y2="19.700000000000045" stroke="#444"/><line x1="1162" y1="19.700000000000045" x2="1168" y2="19.700000000000045" stroke="#444"/><line x1="1157" y1="22.100000000000023" x2="1158.5" y2="22.100000000000023" stroke="#444"/><line x1="1160" y1="22.100000000000023" x2="1168" y2="22.100000000000023" stroke="#444"/><line x1="1175" y1="12.5" x2="1189" y2="12.5" stroke="#444" stroke-width="1.1"/><line x1="1175" y1="14.899999999999977" x2="1189" y2="14.899999999999977" stroke="#444" stroke-width="1.1"/><line x1="1175" y1="17.299999999999955" x2="1189" y2="17.299999999999955" stroke="#444" stroke-width="1.1"/><line x1="1175" y1="19.700000000000045" x2="1189" y2="19.700000000000045" stroke="#444" stroke-width="1.1"/><line x1="1175" y1="22.100000000000023" x2="1189" y2="22.100000000000023" stroke="#444" stroke-width="1.1"/><line x1="1246" y1="17.5" x2="1346" y2="17.5" stroke="#8e9297"/><line x1="1246" y1="18.5" x2="1346" y2="18.5" stroke="#fbfbfc"/><line x1="1295.5" y1="13" x2="1295.5" y2="22" stroke="#999" stroke-dasharray="1 1"/><circle cx="1238" cy="17" r="7.5" fill="#f7f8f9" stroke="#75797e"/><rect x="1234" y="16" width="8" height="2" fill="#333"/><circle cx="1354" cy="17" r="7.5" fill="#f7f8f9" stroke="#75797e"/><rect x="1350" y="16" width="8" height="2" fill="#333"/><rect x="1353" y="13" width="2" height="8" fill="#333"/><path d="M1267.5 10.5 H1276.5 V18.5 L1272 22.5 L1267.5 18.5 Z" fill="#fbfbfc" stroke="#6d7176"/><path d="M16 41 L23 40 V47.299999999999955 H16 Z M24 39.799999999999955 L32.3 38.799999999999955 V47.299999999999955 H24 Z M16 48.299999999999955 H23 V55.60000000000002 L16 54.60000000000002 Z M24 48.299999999999955 H32.3 V56.799999999999955 L24 55.799999999999955 Z" fill="#fff"/><circle cx="70.5" cy="45.5" r="5" fill="none" stroke="#222" stroke-width="1.3"/><line x1="67" y1="49" x2="60.5" y2="55.5" stroke="#222" stroke-width="1.4"/><rect x="343" y="66" width="40" height="2" fill="#76b9ed"/><rect x="392" y="66" width="40" height="2" fill="#76b9ed"/><rect x="441" y="66" width="40" height="2" fill="#76b9ed"/><rect x="490" y="66" width="40" height="2" fill="#76b9ed"/><rect x="535" y="66" width="48" height="2" fill="#76b9ed"/><ellipse cx="363" cy="48" rx="11.5" ry="11.8" fill="#e0172b"/><ellipse cx="363" cy="48" rx="4.6" ry="8.6" fill="#382c23"/><ellipse cx="363" cy="48" rx="11.5" ry="11.8" fill="none" stroke="#b5101f" stroke-width="1"/><circle cx="412" cy="48" r="12" fill="#e33b2e"/><path d="M412 48 L401.6 42 A12 12 0 0 0 412 60 Z" fill="#2da94f"/><path d="M412 48 L412 60 A12 12 0 0 0 422.4 42 Z" fill="#fcc934"/><path d="M412 48 L422.4 42 A12 12 0 0 0 401.6 42 Z" fill="#e33b2e"/><circle cx="412" cy="48" r="5.6" fill="#fff"/><circle cx="412" cy="48" r="4.3" fill="#1a73e8"/><path d="M450 39 H457 L459 41 H471 V56 H450 Z" fill="#e9b941"/><rect x="450" y="42" width="21" height="14" fill="#f8d775"/><path d="M454 59 V51 H467 V59 H463.5 V54 H457.5 V59 Z" fill="#3b8fd9"/><rect x="498" y="38" width="23" height="7" rx="1" fill="#8a3fb0"/><rect x="498" y="39" width="23" height="1.5" fill="#fff" opacity=".35"/><rect x="498" y="45" width="23" height="7" rx="1" fill="#3b54b8"/><rect x="498" y="46" width="23" height="1.5" fill="#fff" opacity=".35"/><rect x="498" y="52" width="23" height="7" rx="1" fill="#3aa350"/><rect x="498" y="53" width="23" height="1.5" fill="#fff" opacity=".35"/><rect x="508" y="37" width="3" height="23" fill="#6b4a2a"/><rect x="547" y="37" width="22" height="22" fill="#f2f5fa"/><rect x="547" y="37" width="22" height="22" fill="none" stroke="#9fb4d6"/><text x="557" y="54" font-family="Liberation Sans" font-weight="bold" font-size="16" fill="#1d4fa8" text-anchor="middle">W</text><path d="M561 52 H569 V59 H561 Z" fill="#fff" opacity=".8"/><path d="M962 56 Q957 56 958.5 51.5 Q959.5 48 964 48.5 Q965 41.5 972 41.5 Q978.5 41.5 979.5 47.5 Q984.5 48 984 52 Q983.5 56 979 56 Z" fill="#a8cdf0"/><path d="M962 56 Q957 56 958.5 51.5 Q965 54 984 52 Q983.5 56 979 56 Z" fill="#7fb2e5"/><path d="M1097.5 51 L1103.3 45.200000000000045 L1109.2 51" fill="none" stroke="#fff" stroke-width="1.3"/><rect x="1123.5" y="44.5" width="6" height="7" rx="1.5" fill="none" stroke="#fff"/><path d="M1129.5 46 L1132.5 44.5 V51.5 L1129.5 50" fill="none" stroke="#fff"/><path d="M1123 41.5 Q1127 39.5 1131 41.5 M1123 54.5 Q1127 56.5 1131 54.5" fill="none" stroke="#fff" stroke-width=".9"/><rect x="1148.5" y="45.5" width="9" height="7" fill="#fff" stroke="#fff"/><rect x="1158" y="47.5" width="1.5" height="3" fill="#fff"/><path d="M1144.5 43 V46 M1146.5 43 V46 M1143.5 46 H1147.5 V48 Q1145.5 50 1143.5 48 Z M1145.5 49 V53 H1148.5" fill="none" stroke="#fff" stroke-width="1"/><path d="M1177.5 54.5 A3.5 3.5 0 0 1 1181 51.0" fill="none" stroke="#fff" stroke-width="1.3"/><path d="M1174 54.5 A7 7 0 0 1 1181 47.5" fill="none" stroke="#fff" stroke-width="1.3"/><path d="M1170.5 54.5 A10.5 10.5 0 0 1 1181 44.0" fill="none" stroke="#fff" stroke-width="1.3"/><circle cx="1181" cy="54.5" r="1.3" fill="#fff"/><path d="M1191.5 46.5 H1194.5 L1198.5 42.5 V55 L1194.5 51 H1191.5 Z" fill="none" stroke="#fff"/><path d="M1200.5 46 Q1202.5 48.799999999999955 1200.5 51.5 M1202.5 44 Q1206 48.799999999999955 1202.5 53.5" fill="none" stroke="#fff"/><path d="M1204.5 42 Q1209.5 48.799999999999955 1204.5 55.5" fill="none" stroke="#bbb" stroke-width=".9"/><path d="M1325 41 H1341.5 V53.5 H1330 L1326.5 57 V53.5 H1325 Z" fill="#fff"/><line x1="1328" y1="44.5" x2="1338.5" y2="44.5" stroke="#2e2520" stroke-width="1.1"/><line x1="1328" y1="47.200000000000045" x2="1338.5" y2="47.200000000000045" stroke="#2e2520" stroke-width="1.1"/><line x1="1328" y1="49.89999999999998" x2="1338.5" y2="49.89999999999998" stroke="#2e2520" stroke-width="1.1"/><circle cx="1340.5" cy="55.299999999999955" r="7.8" fill="#2f2b29" stroke="#8d8986" stroke-width="1"/><text x="1340.5" y="59.799999999999955" font-family="Liberation Sans" font-size="12" fill="#fff" text-anchor="middle">3</text><line x1="1360.5" y1="28" x2="1360.5" y2="68" stroke="#6f6660"/></svg>
<div class="t" style="left:471.00px;top:6.00px;font-family:'Liberation Sans';font-size:12px;line-height:16px;color:#222;letter-spacing:-0.028px;">Про оцінювання 1-2, 3-4 класів  -  Microsoft Word (Сбой активации продукта)</div>
<div class="t" style="left:14.50px;top:29.60px;font-family:'Liberation Sans';font-size:11.5px;line-height:15px;color:#ffffff;letter-spacing:-0.354px;">Файл</div>
<div class="t" style="left:73.50px;top:29.60px;font-family:'Liberation Sans';font-size:11.5px;line-height:15px;color:#333333;letter-spacing:-0.424px;">Главная</div>
<div class="t" style="left:143.00px;top:29.60px;font-family:'Liberation Sans';font-size:11.5px;line-height:15px;color:#333333;letter-spacing:-0.641px;">Вставка</div>
<div class="t" style="left:211.50px;top:29.60px;font-family:'Liberation Sans';font-size:11.5px;line-height:15px;color:#333333;letter-spacing:-0.129px;">Разметка страницы</div>
<div class="t" style="left:342.00px;top:29.60px;font-family:'Liberation Sans';font-size:11.5px;line-height:15px;color:#333333;letter-spacing:-0.412px;">Ссылки</div>
<div class="t" style="left:409.00px;top:29.60px;font-family:'Liberation Sans';font-size:11.5px;line-height:15px;color:#333333;letter-spacing:-0.313px;">Рассылки</div>
<div class="t" style="left:486.00px;top:29.60px;font-family:'Liberation Sans';font-size:11.5px;line-height:15px;color:#333333;letter-spacing:0.123px;">Рецензирование</div>
<div class="t" style="left:604.00px;top:29.60px;font-family:'Liberation Sans';font-size:11.5px;line-height:15px;color:#333333;letter-spacing:-1.047px;">Вид</div>
<div class="t" style="left:8.40px;top:88.60px;font-family:'Liberation Sans';font-size:11.5px;line-height:15px;color:#333333;letter-spacing:-0.457px;">Разметка</div>
<div class="t" style="left:8.40px;top:101.80px;font-family:'Liberation Sans';font-size:11.5px;line-height:15px;color:#333333;letter-spacing:-0.510px;">страницы</div>
<div class="t" style="left:64.00px;top:88.60px;font-family:'Liberation Sans';font-size:11.5px;line-height:15px;color:#333333;letter-spacing:0.113px;">Режим</div>
<div class="t" style="left:64.00px;top:101.80px;font-family:'Liberation Sans';font-size:11.5px;line-height:15px;color:#333333;letter-spacing:0.040px;">чтения</div>
<div class="t" style="left:106.00px;top:88.60px;font-family:'Liberation Sans';font-size:11.5px;line-height:15px;color:#333333;letter-spacing:-0.218px;">Веб-документ</div>
<div class="t" style="left:184.50px;top:88.60px;font-family:'Liberation Sans';font-size:11.5px;line-height:15px;color:#333333;letter-spacing:-0.458px;">Структура</div>
<div class="t" style="left:242.00px;top:88.60px;font-family:'Liberation Sans';font-size:11.5px;line-height:15px;color:#333333;letter-spacing:0.181px;">Черновик</div>
<div class="t" style="left:68.50px;top:118.60px;font-family:'Liberation Sans';font-size:11.5px;line-height:15px;color:#666666;letter-spacing:0.013px;">Режимы просмотра документа</div>
<div class="t" style="left:329.30px;top:55.00px;font-family:'Liberation Sans';font-size:11.5px;line-height:15px;color:#333333;letter-spacing:-0.004px;">Линейка</div>
<div class="t" style="left:329.30px;top:77.00px;font-family:'Liberation Sans';font-size:11.5px;line-height:15px;color:#333333;letter-spacing:-0.792px;">Сетка</div>
<div class="t" style="left:329.30px;top:99.00px;font-family:'Liberation Sans';font-size:11.5px;line-height:15px;color:#333333;letter-spacing:0.078px;">Область навигации</div>
<div class="t" style="left:349.80px;top:119.00px;font-family:'Liberation Sans';font-size:11.5px;line-height:15px;color:#666666;letter-spacing:-0.171px;">Показать</div>
<div class="t" style="left:451.70px;top:88.60px;font-family:'Liberation Sans';font-size:11.5px;line-height:15px;color:#333333;letter-spacing:-0.519px;">Масштаб</div>
<div class="t" style="left:509.40px;top:88.60px;font-family:'Liberation Sans';font-size:11.5px;line-height:15px;color:#333333;letter-spacing:-0.996px;">100%</div>
<div class="t" style="left:566.50px;top:55.00px;font-family:'Liberation Sans';font-size:11.5px;line-height:15px;color:#333333;letter-spacing:-0.135px;">Одна страница</div>
<div class="t" style="left:566.50px;top:77.00px;font-family:'Liberation Sans';font-size:11.5px;line-height:15px;color:#333333;letter-spacing:-0.039px;">Две страницы</div>
<div class="t" style="left:566.50px;top:99.00px;font-family:'Liberation Sans';font-size:11.5px;line-height:15px;color:#333333;letter-spacing:0.092px;">По ширине страницы</div>
<div class="t" style="left:543.00px;top:119.00px;font-family:'Liberation Sans';font-size:11.5px;line-height:15px;color:#666666;letter-spacing:-0.302px;">Масштаб</div>
<div class="t" style="left:698.00px;top:88.60px;font-family:'Liberation Sans';font-size:11.5px;line-height:15px;color:#333333;letter-spacing:0.181px;">Новое</div>
<div class="t" style="left:703.00px;top:101.80px;font-family:'Liberation Sans';font-size:11.5px;line-height:15px;color:#333333;letter-spacing:0.741px;">окно</div>
<div class="t" style="left:739.20px;top:88.60px;font-family:'Liberation Sans';font-size:11.5px;line-height:15px;color:#333333;letter-spacing:0.186px;">Упорядочить</div>
<div class="t" style="left:766.40px;top:101.80px;font-family:'Liberation Sans';font-size:11.5px;line-height:15px;color:#333333;letter-spacing:-0.565px;">все</div>
<div class="t" style="left:815.30px;top:88.60px;font-family:'Liberation Sans';font-size:11.5px;line-height:15px;color:#333333;letter-spacing:-0.375px;">Разделить</div>
<div class="t" style="left:902.30px;top:55.00px;font-family:'Liberation Sans';font-size:11.5px;line-height:15px;color:#a8a8a8;letter-spacing:-0.530px;">Рядом</div>
<div class="t" style="left:902.30px;top:77.00px;font-family:'Liberation Sans';font-size:11.5px;line-height:15px;color:#a8a8a8;letter-spacing:0.102px;">Синхронная прокрутка</div>
<div class="t" style="left:902.30px;top:99.00px;font-family:'Liberation Sans';font-size:11.5px;line-height:15px;color:#a8a8a8;letter-spacing:0.039px;">Восстановить расположение окна</div>
<div class="t" style="left:922.20px;top:119.00px;font-family:'Liberation Sans';font-size:11.5px;line-height:15px;color:#666666;letter-spacing:0.491px;">Окно</div>
<div class="t" style="left:1110.40px;top:88.60px;font-family:'Liberation Sans';font-size:11.5px;line-height:15px;color:#333333;letter-spacing:0.030px;">Перейти в</div>
<div class="t" style="left:1101.00px;top:101.80px;font-family:'Liberation Sans';font-size:11.5px;line-height:15px;color:#333333;letter-spacing:0.357px;">другое окно</div>
<div class="t" style="left:1189.30px;top:88.60px;font-family:'Liberation Sans';font-size:11.5px;line-height:15px;color:#333333;letter-spacing:0.087px;">Макросы</div>
<div class="t" style="left:1189.30px;top:118.50px;font-family:'Liberation Sans';font-size:11.5px;line-height:15px;color:#666666;letter-spacing:0.087px;">Макросы</div>
<div class="t" style="left:8.70px;top:710.30px;font-family:'Liberation Sans';font-size:11.5px;line-height:15px;color:#444;letter-spacing:-0.133px;">Страница: 3 из 3</div>
<div class="t" style="left:115.50px;top:710.30px;font-family:'Liberation Sans';font-size:11.5px;line-height:15px;color:#444;letter-spacing:-0.325px;">Число слов: 461</div>
<div class="t" style="left:248.60px;top:710.30px;font-family:'Liberation Sans';font-size:11.5px;line-height:15px;color:#444;letter-spacing:0.394px;">украинский</div>
<div class="t" style="left:1201.70px;top:711.00px;font-family:'Liberation Sans';font-size:11.5px;line-height:15px;color:#444;letter-spacing:-1.396px;">50%</div>
<div class="t" style="left:87.00px;top:738.00px;font-family:'Liberation Sans';font-size:16px;line-height:21px;color:#333;letter-spacing:-0.334px;">Поиск</div>
<div class="t" style="left:991.50px;top:739.50px;font-family:'Liberation Sans';font-size:14.5px;line-height:19px;color:#fff;letter-spacing:-1.009px;">20°C</div>
<div class="t" style="left:1029.50px;top:739.50px;font-family:'Liberation Sans';font-size:14.5px;line-height:19px;color:#fff;letter-spacing:-0.677px;">Cloudy</div>
<div class="t" style="left:1217.50px;top:740.40px;font-family:'Liberation Sans';font-size:12.5px;line-height:17px;color:#fff;letter-spacing:-1.011px;">УКР</div>
<div class="t" style="left:1265.80px;top:730.80px;font-family:'Liberation Sans';font-size:12px;line-height:16px;color:#fff;letter-spacing:-0.939px;">23:51</div>
<div class="t" style="left:1253.40px;top:748.00px;font-family:'Liberation Sans';font-size:12px;line-height:16px;color:#fff;letter-spacing:-0.754px;">10.08.2025</div>
</body></html>
